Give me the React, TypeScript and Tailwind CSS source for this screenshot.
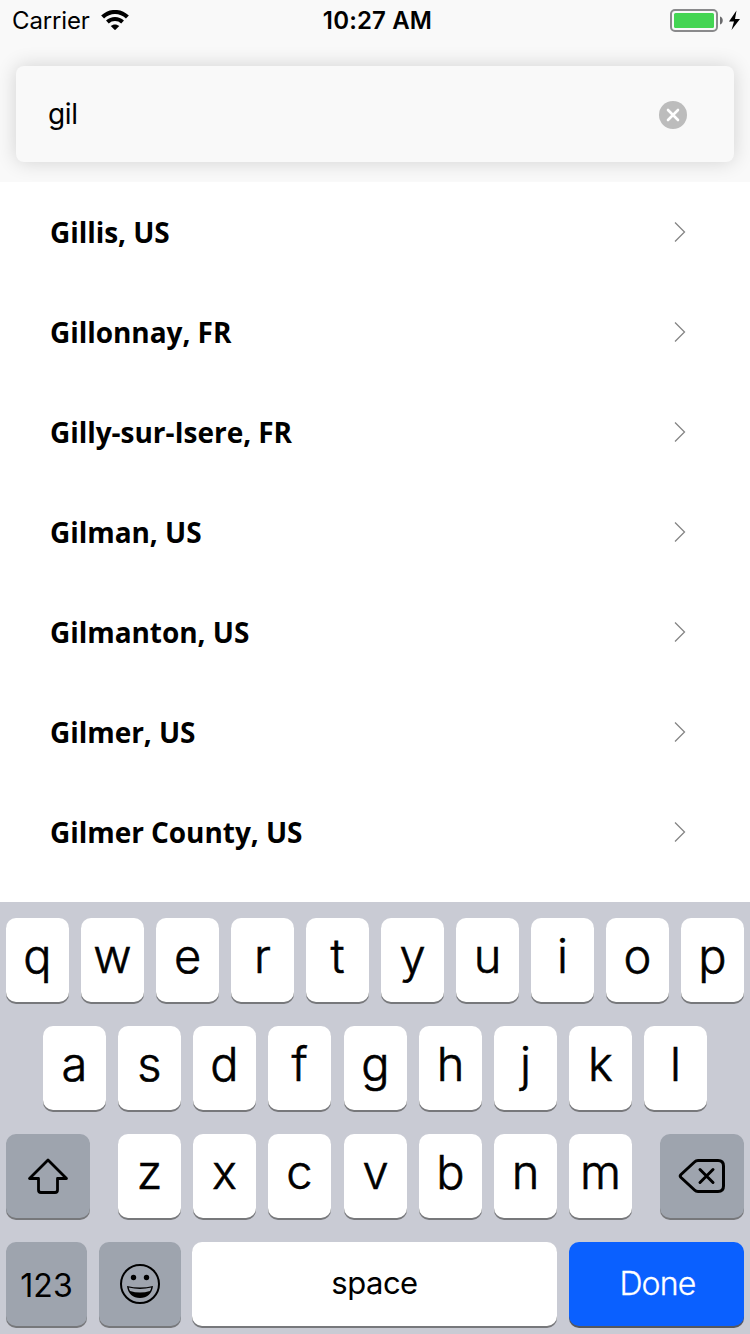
import type { ReactNode } from "react";

const cities = [
  "Gillis, US",
  "Gillonnay, FR",
  "Gilly-sur-Isere, FR",
  "Gilman, US",
  "Gilmanton, US",
  "Gilmer, US",
  "Gilmer County, US",
];

function StatusBar() {
  return (
    <div className="grid h-10 grid-cols-3 items-center pt-px pr-[9px] pl-3 text-2xl leading-6 text-black">
      <div className="flex items-center gap-[11px]">
        <span className="pt-px tracking-[-0.15px]">Carrier</span>
        <svg width="28" height="20" viewBox="0 0 28 20" fill="none" className="-mt-px">
          <path d="M1.6 7.1C8.7 0.3 19.3 0.3 26.4 7.1" stroke="#000" strokeWidth="4.2" />
          <path d="M6.4 12C10.7 8 17.3 8 21.6 12" stroke="#000" strokeWidth="4" />
          <path d="M14 20.2L9.7 16C12.1 13.900 15.900 13.900 18.300 16Z" fill="#000" />
        </svg>
      </div>
      <span className="justify-self-center pt-px pl-0.5 font-semibold tracking-[0.15px]">10:27 AM</span>
      <div className="flex items-center justify-self-end">
        <svg width="72" height="24" viewBox="0 0 72 24" fill="none" className="-mt-px">
          <rect x="2" y="2" width="46" height="21" rx="4" stroke="#8a8a8c" strokeWidth="2" />
          <rect x="5" y="5" width="40" height="15" rx="1.5" fill="#44d553" />
          <path d="M51 8.5C54.7 9.5 54.7 15.500 51 16.500Z" fill="#6b6b6d" />
          <path d="M67.500 2.500L60 13.500H65L62.500 22L71 11H66Z" fill="#000" />
        </svg>
      </div>
    </div>
  );
}

function SearchField() {
  return (
    <div className="mx-4 mt-[26px] flex h-24 items-center justify-between rounded-lg bg-[#f9f9f9] pr-[47px] pl-8 shadow-[0_0_20px_rgba(0,0,0,0.16)]">
      <span className="text-[28px] leading-8 tracking-[-0.4px]">gil</span>
      <svg width="28" height="28" viewBox="0 0 28 28" className="mt-0.5">
        <circle cx="14" cy="14" r="14" fill="#bcbcbc" />
        <path d="M9 9L19 19M19 9L9 19" stroke="#fff" strokeWidth="2.600" strokeLinecap="round" />
      </svg>
    </div>
  );
}

function CityRow({ name }: { name: string }) {
  return (
    <li className="flex h-[100px] items-center justify-between pr-16 pl-[50px]">
      <span className="font-['Open_Sans',sans-serif] text-[28px] leading-9 font-bold tracking-[-0.05px]">{name}</span>
      <svg width="12" height="22" viewBox="0 0 12 22" fill="none">
        <path d="M1 1.500L10.500 11L1 20.500" stroke="#858585" strokeWidth="1.300" />
      </svg>
    </li>
  );
}

function Letter({ children }: { children: string }) {
  return (
    <div className="flex h-[84px] w-[63px] items-center justify-center rounded-[10px] bg-white pb-[9px] text-[47px] leading-[60px] font-light shadow-[0_2px_0_#77787b] [-webkit-text-stroke:0.6px_#000]">
      {children}
    </div>
  );
}

function Letters({ keys }: { keys: string }) {
  return (
    <div className="flex gap-3">
      {keys.split("").map((k) => (
        <Letter key={k}>{k}</Letter>
      ))}
    </div>
  );
}

function ModifierKey({ width, children }: { width: string; children: ReactNode }) {
  return (
    <div
      className={`flex h-[84px] items-center justify-center rounded-[10px] bg-[#9ea4ae] shadow-[0_2px_0_#77787b] ${width}`}
    >
      {children}
    </div>
  );
}

function Keyboard() {
  return (
    <div className="flex h-[432px] flex-col gap-6 bg-[#c9cbd4] px-1.5 pt-4">
      <Letters keys="qwertyuiop" />
      <div className="flex gap-[13px] pl-[37px]">
        <Letters keys="asdf" />
        <Letters keys="ghjkl" />
      </div>
      <div className="flex justify-between">
        <ModifierKey width="w-[84px]">
          <svg width="42" height="38" viewBox="0 0 42 38" fill="none" stroke="#000" strokeWidth="2.800" strokeLinejoin="round">
            <path d="M21 3L2.500 21.500H11.500V33Q11.500 35.500 14 35.500H28Q30.500 35.500 30.500 33V21.500H39.500Z" />
          </svg>
        </ModifierKey>
        <div className="flex gap-[13px]">
          <Letters keys="zxc" />
          <Letters keys="vbnm" />
        </div>
        <ModifierKey width="w-[84px]">
          <svg width="48" height="36" viewBox="0 0 48 36" fill="none" stroke="#000" strokeWidth="3" strokeLinecap="round" strokeLinejoin="round">
            <path d="M20 2.500H40Q45.500 2.500 45.500 8V28Q45.500 33.500 40 33.500H20Q18 33.500 16.500 32L3 19.500Q1.500 18 3 16.500L16.500 4Q18 2.500 20 2.500Z" />
            <path d="M22 11.500L35 24.500M35 11.500L22 24.500" />
          </svg>
        </ModifierKey>
      </div>
      <div className="flex">
        <ModifierKey width="w-[81px]">
          <span className="pt-[3px] text-[32px] leading-10">123</span>
        </ModifierKey>
        <div className="ml-3">
          <ModifierKey width="w-[82px]">
            <svg width="42" height="42" viewBox="0 0 42 42" fill="none">
              <circle cx="21" cy="21" r="19" stroke="#000" strokeWidth="2" />
              <circle cx="14.500" cy="14.500" r="2.700" fill="#000" />
              <circle cx="27.500" cy="14.500" r="2.700" fill="#000" />
              <path d="M8 23Q21 26 34 23C33 31 28 35 21 35S9 31 8 23Z" fill="#000" />
              <path d="M9.700 24.600Q21 27.200 32.300 24.600Q32 26.500 31 28Q21 31 11 28Q10 26.500 9.700 24.600Z" fill="#9ea4ae" />
            </svg>
          </ModifierKey>
        </div>
        <div className="ml-[11px] flex h-[84px] w-[365px] items-center justify-center rounded-[10px] bg-white pb-0.5 text-[31px] leading-10 tracking-[-0.5px] shadow-[0_2px_0_#77787b]">
          space
        </div>
        <div className="ml-3 flex h-[84px] w-[175px] items-center justify-center rounded-[10px] bg-[#0a60ff] pl-0.5 text-[32px] leading-10 font-light tracking-[-0.8px] text-white shadow-[0_2px_0_#55585f] [-webkit-text-stroke:0.3px_#fff]">
          Done
        </div>
      </div>
    </div>
  );
}

export default function App() {
  return (
    <div className="flex h-[1334px] w-[750px] flex-col overflow-hidden bg-white font-[Inter,sans-serif] text-black">
      <header className="h-[182px] overflow-hidden bg-[#f9f9f9]">
        <StatusBar />
        <SearchField />
      </header>
      <ul className="h-[720px] overflow-hidden">
        {cities.map((name) => (
          <CityRow key={name} name={name} />
        ))}
      </ul>
      <Keyboard />
    </div>
  );
}
